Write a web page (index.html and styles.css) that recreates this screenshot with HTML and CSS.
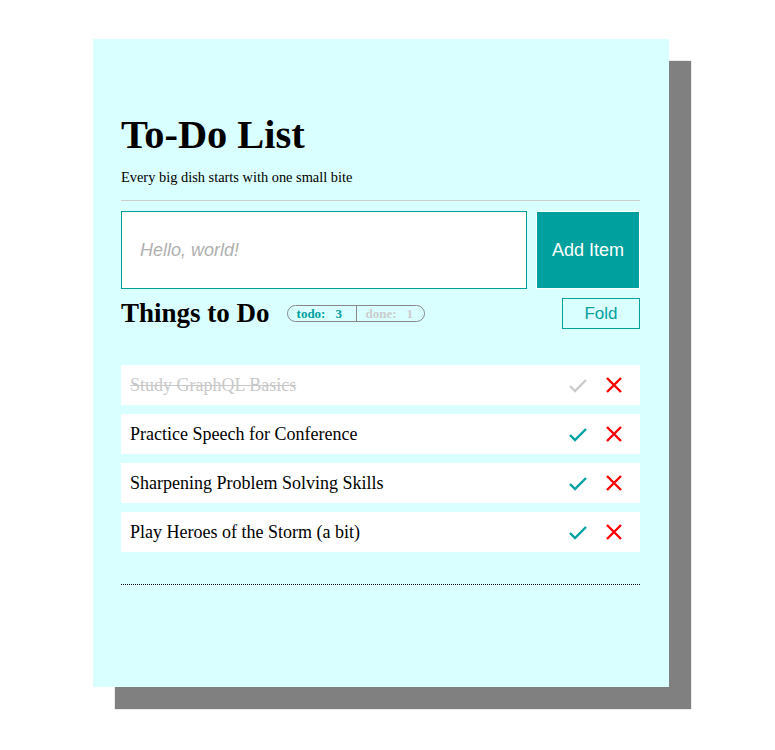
FILE: index.html
```html
<!DOCTYPE html>
<html>
<head>
<meta charset="utf-8">
<link rel="stylesheet" href="styles.css">
</head>
<body>
<div class="page">
  <div class="card">
    <h1 class="title">To-Do List</h1>
    <p class="subtitle">Every big dish starts with one small bite</p>
    <hr class="rule">
    <form class="add-row">
      <input class="add-input" type="text" placeholder="Hello, world!">
      <button class="add-btn" type="button">Add Item</button>
    </form>
    <div class="list-head">
      <h2 class="list-title">Things to Do</h2>
      <div class="counts">
        <span class="count todo">todo:<b class="num">3</b></span>
        <span class="count done">done:<b class="num">1</b></span>
      </div>
      <button class="fold-btn" type="button">Fold</button>
    </div>
    <ul class="items">
      <li class="item is-done">
        <span class="item-text">Study GraphQL Basics</span>
        <span class="actions">
          <svg class="icon check" viewBox="0 0 20 20"><path d="M2 11 L7 16 L18 5"/></svg>
          <svg class="icon del" viewBox="0 0 20 20"><path d="M3 3 L17 17 M17 3 L3 17"/></svg>
        </span>
      </li>
      <li class="item">
        <span class="item-text">Practice Speech for Conference</span>
        <span class="actions">
          <svg class="icon check" viewBox="0 0 20 20"><path d="M2 11 L7 16 L18 5"/></svg>
          <svg class="icon del" viewBox="0 0 20 20"><path d="M3 3 L17 17 M17 3 L3 17"/></svg>
        </span>
      </li>
      <li class="item">
        <span class="item-text">Sharpening Problem Solving Skills</span>
        <span class="actions">
          <svg class="icon check" viewBox="0 0 20 20"><path d="M2 11 L7 16 L18 5"/></svg>
          <svg class="icon del" viewBox="0 0 20 20"><path d="M3 3 L17 17 M17 3 L3 17"/></svg>
        </span>
      </li>
      <li class="item">
        <span class="item-text">Play Heroes of the Storm (a bit)</span>
        <span class="actions">
          <svg class="icon check" viewBox="0 0 20 20"><path d="M2 11 L7 16 L18 5"/></svg>
          <svg class="icon del" viewBox="0 0 20 20"><path d="M3 3 L17 17 M17 3 L3 17"/></svg>
        </span>
      </li>
    </ul>
    <div class="footer-line"></div>
  </div>
</div>
</body>
</html>
```

FILE: styles.css
```css
* { box-sizing: border-box; }
html, body { margin: 0; padding: 0; background: #fff; }
body { font-family: "Liberation Serif", "Times New Roman", serif; color: #000; }

.page {
  padding: 39px 0 63px 93px;
  min-height: 750px;
}

.card {
  width: 576px;
  height: 648px;
  background: #d9ffff;
  box-shadow: 22px 22px 1px #808080;
  padding: 73px 29px 0 28px;
}

.title {
  margin: 0;
  font-size: 40.4px;
  line-height: 46px;
  font-weight: bold;
}

.subtitle {
  margin: 11px 0 0;
  font-size: 14.4px;
  line-height: 16px;
}

.rule {
  margin: 15px 0 0;
  border: 0;
  border-top: 1px solid #cccccc;
  height: 0;
}

.add-row {
  margin: 10px 0 0;
  display: flex;
  gap: 9px;
  height: 78px;
}

.add-input {
  flex: 1;
  min-width: 0;
  height: 78px;
  border: 1px solid #00a0a0;
  background: #fff;
  padding: 0 0 0 18px;
  font-family: "Liberation Sans", Arial, sans-serif;
  font-size: 18px;
  outline: none;
}
.add-input::placeholder {
  color: #b0b0b0;
  font-style: italic;
}

.add-btn {
  width: 104px;
  height: 78px;
  border: 1px solid #fff;
  background: #00a09e;
  color: #fff;
  font-family: "Liberation Sans", Arial, sans-serif;
  font-size: 18px;
  padding: 0;
}

.list-head {
  margin-top: 9px;
  display: flex;
  align-items: center;
  height: 31px;
}

.list-title {
  margin: 0;
  font-size: 27px;
  line-height: 31px;
  font-weight: bold;
}

.counts {
  margin-left: 17px;
  display: flex;
  height: 17px;
  border: 1px solid #888;
  border-radius: 9px;
  font-size: 13px;
  font-weight: bold;
  line-height: 15px;
}
.count {
  display: flex;
  padding: 0 0 0 9px;
}
.count.todo {
  width: 69px;
  color: #00a0a0;
  border-right: 1px solid #888;
}
.count.done {
  width: 67px;
  color: #cccccc;
}
.num {
  margin-left: 10px;
}

.fold-btn {
  margin-left: auto;
  width: 78px;
  height: 31px;
  border: 1px solid #00a0a0;
  background: transparent;
  color: #00a0a0;
  font-family: "Liberation Sans", Arial, sans-serif;
  font-size: 17px;
  padding: 0;
}

.items {
  list-style: none;
  margin: 36px 0 0;
  padding: 0;
  display: flex;
  flex-direction: column;
  gap: 9px;
}

.item {
  height: 40px;
  background: #fff;
  display: flex;
  align-items: center;
  padding: 0 16px 0 9px;
  font-size: 18px;
}
.item-text { flex: 1; }
.item.is-done .item-text {
  color: #c8c8c8;
  text-decoration: line-through;
}

.actions {
  display: flex;
  gap: 16px;
  align-items: center;
}
.icon {
  width: 20px;
  height: 20px;
  fill: none;
  stroke-width: 2.4;
  stroke-linecap: butt;
}
.icon.check { stroke: #00a0a0; }
.item.is-done .icon.check { stroke: #cccccc; }
.icon.del { stroke: #ff0000; }

.footer-line {
  margin-top: 32px;
  border-top: 1px dotted #000;
}
```
